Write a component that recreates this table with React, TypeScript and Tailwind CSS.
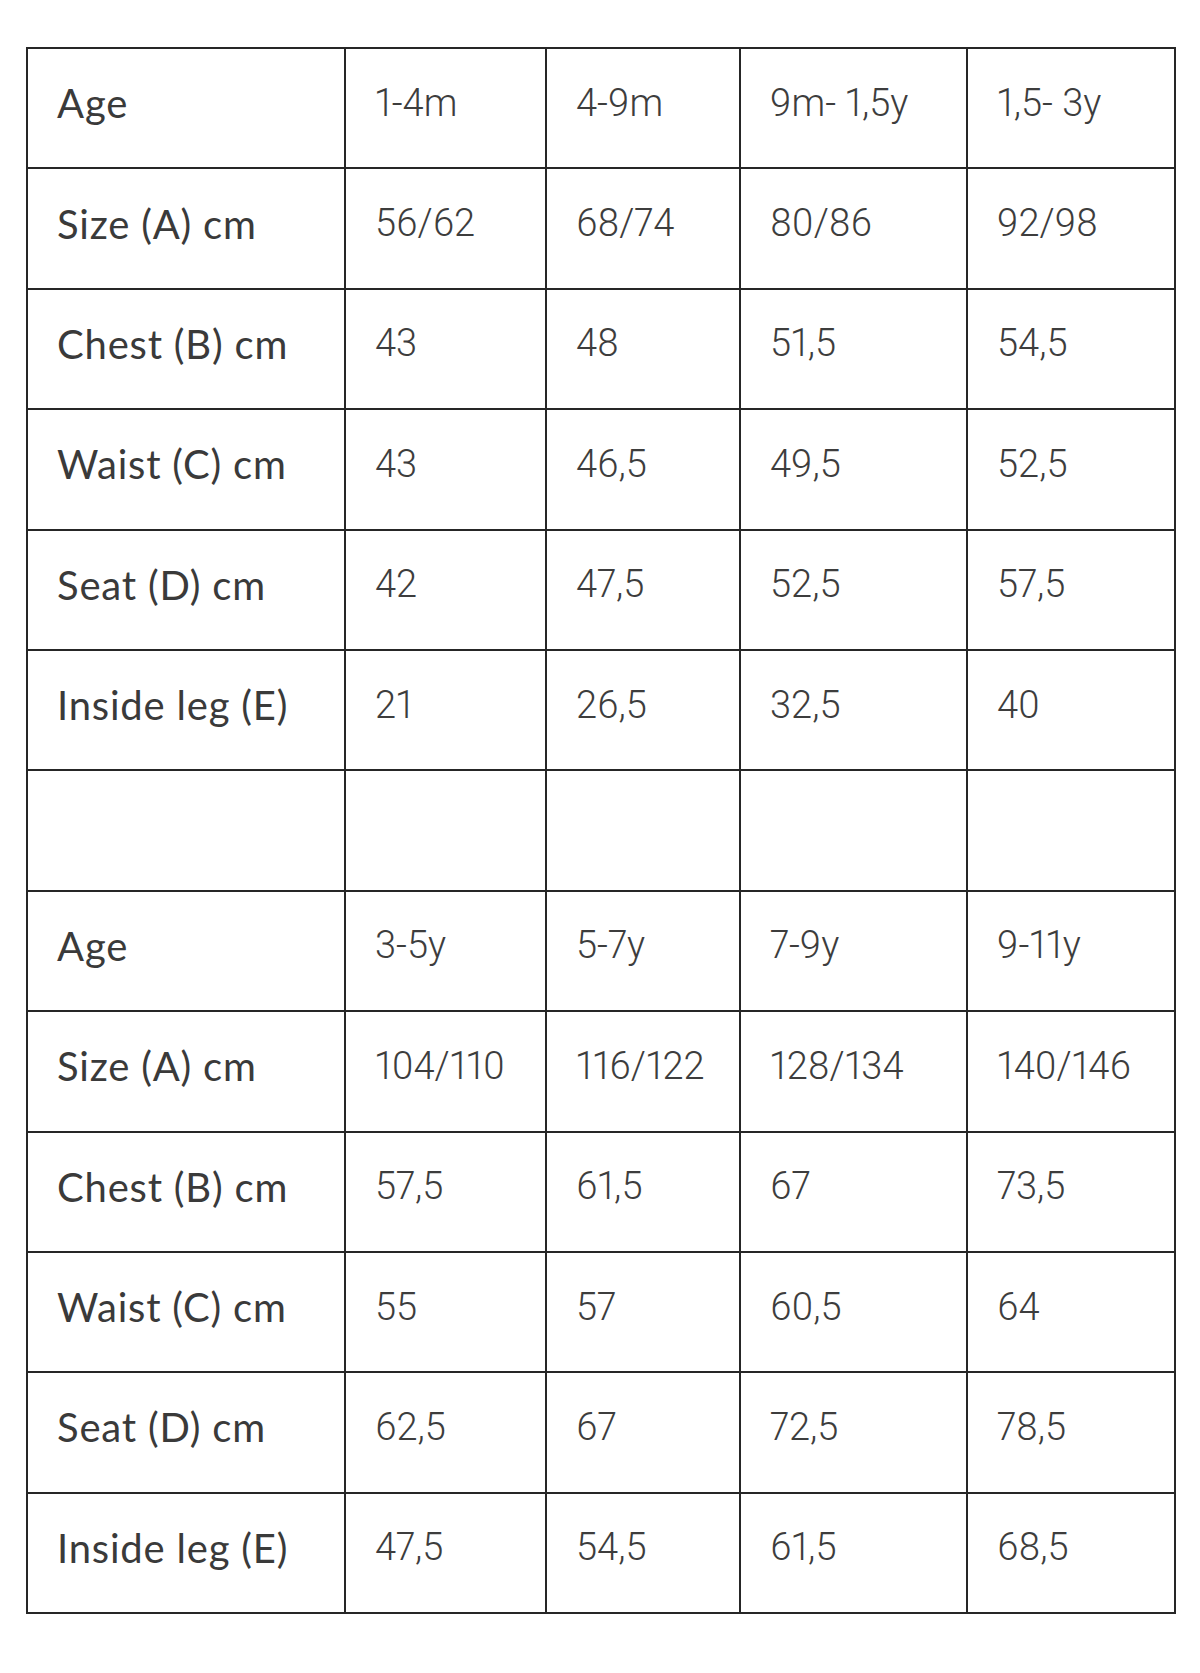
import { Fragment } from 'react';

const blocks = [
  {
    ages: ['1-4m', '4-9m', '9m- 1,5y', '1,5- 3y'],
    rows: [
      ['Size (A) cm', '56/62', '68/74', '80/86', '92/98'],
      ['Chest (B) cm', '43', '48', '51,5', '54,5'],
      ['Waist (C) cm', '43', '46,5', '49,5', '52,5'],
      ['Seat (D) cm', '42', '47,5', '52,5', '57,5'],
      ['Inside leg (E)', '21', '26,5', '32,5', '40'],
    ],
  },
  {
    ages: ['3-5y', '5-7y', '7-9y', '9-11y'],
    rows: [
      ['Size (A) cm', '104/110', '116/122', '128/134', '140/146'],
      ['Chest (B) cm', '57,5', '61,5', '67', '73,5'],
      ['Waist (C) cm', '55', '57', '60,5', '64'],
      ['Seat (D) cm', '62,5', '67', '72,5', '78,5'],
      ['Inside leg (E)', '47,5', '54,5', '61,5', '68,5'],
    ],
  },
];

const cell = 'border-2 border-[#262626] pl-[29px] pb-[10px] align-middle';
const label = `${cell} font-['Lato',sans-serif] text-[40px] tracking-[0.8px] text-[#3a3a3a]`;
const num = `${cell} font-['Roboto',sans-serif] font-light proportional-nums text-[38px] text-[#3d3d3d]`;

function Row({ cells }: { cells: string[] }) {
  return (
    <tr className="h-[120.4px]">
      {cells.map((c, i) => (
        <td key={i} className={i === 0 ? label : num}>
          {c}
        </td>
      ))}
    </tr>
  );
}

export default function App() {
  return (
    <div className="min-h-[1673px] w-[1200px] bg-white pl-[26px] pt-[47px]">
      <table className="w-[1148px] table-fixed border-collapse">
        <colgroup>
          <col className="w-[318px]" />
          <col className="w-[201px]" />
          <col className="w-[194px]" />
          <col className="w-[227px]" />
          <col className="w-[208px]" />
        </colgroup>
        <tbody>
          {blocks.map((b, bi) => (
            <Fragment key={bi}>
              {bi > 0 && <Row cells={['', '', '', '', '']} />}
              <Row cells={['Age', ...b.ages]} />
              {b.rows.map((r) => (
                <Row key={r[0]} cells={r} />
              ))}
            </Fragment>
          ))}
        </tbody>
      </table>
    </div>
  );
}
